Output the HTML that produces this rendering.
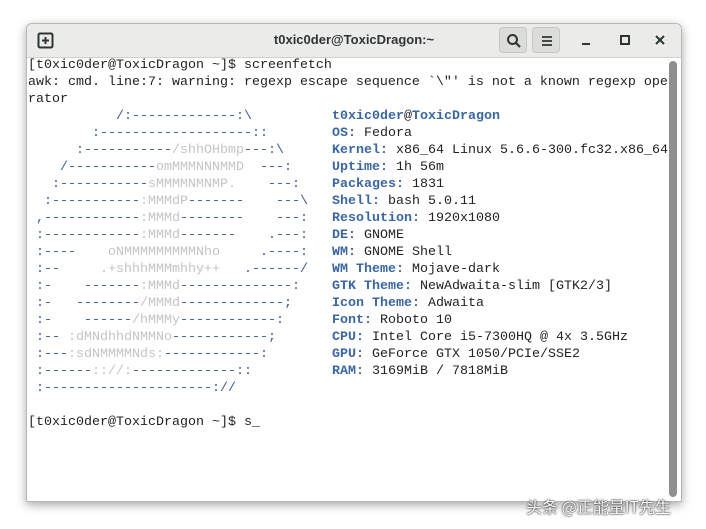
<!DOCTYPE html>
<html><head><meta charset="utf-8"><style>
html,body{margin:0;padding:0;background:#fff;width:706px;height:529px;overflow:hidden;position:relative;font-family:"Liberation Sans",sans-serif}
.win{position:absolute;left:26px;top:23px;width:654px;height:477px;background:#fff;border:1px solid #b8b8b8;border-radius:6px 6px 0 0;box-shadow:0 3px 10px rgba(0,0,0,.35);overflow:hidden}
.tb{position:absolute;left:0;top:0;width:654px;height:33px;background:#ebebea;border-bottom:1px solid #cfcfcd}
.title{position:absolute;left:0;width:654px;top:8px;text-align:center;font-size:13px;font-weight:bold;color:#2e3436}
.btn{position:absolute;top:3px;width:28px;height:26px;background:#dcdcda;border:1px solid #c8c8c6;border-radius:4px;box-sizing:border-box}
pre{position:absolute;left:1px;top:33px;margin:0;font-family:"Liberation Mono",monospace;font-size:13.33px;line-height:17px;color:#222}
.b{color:#3a5f94;display:inline-block;width:304px}.g{color:#c4c4c4}.l{color:#3a66a2;font-weight:bold}
.sb{position:absolute;left:642px;top:37px;width:8px;height:436px;background:#8f8f8f;border-radius:4px}
.wm{position:absolute;left:526px;top:494px;font-family:"Noto Sans CJK SC",sans-serif;font-size:16px;color:#fff;text-shadow:0 0 2px #333,0 0 1px #000}
</style></head><body>
<div class="win">
<div class="tb">
<svg style="position:absolute;left:10px;top:8px" width="17" height="17" viewBox="0 0 17 17"><rect x="1.5" y="1.5" width="14" height="14" rx="1.5" fill="none" stroke="#2e3436" stroke-width="2"/><path d="M8.5 5v7M5 8.5h7" stroke="#2e3436" stroke-width="2"/></svg>
<div class="title">t0xic0der@ToxicDragon:~</div>
<div class="btn" style="left:472px"><svg style="position:absolute;left:6px;top:5px" width="16" height="16" viewBox="0 0 16 16"><circle cx="6.5" cy="6.5" r="4.5" fill="none" stroke="#2e3436" stroke-width="2"/><path d="M10 10l4 4" stroke="#2e3436" stroke-width="2.2"/></svg></div>
<div class="btn" style="left:505px"><svg style="position:absolute;left:7px;top:6px" width="14" height="14" viewBox="0 0 14 14"><path d="M2 3h10M2 7h10M2 11h10" stroke="#2e3436" stroke-width="1.8"/></svg></div>
<div style="position:absolute;left:555px;top:19px;width:8px;height:2px;background:#2e3436"></div>
<div style="position:absolute;left:593px;top:11px;width:6px;height:6px;border:2px solid #2e3436"></div>
<svg style="position:absolute;left:628px;top:11px" width="10" height="10" viewBox="0 0 10 10"><path d="M1 1l8 8M9 1l-8 8" stroke="#2e3436" stroke-width="2"/></svg>
</div>
<pre>[t0xic0der@ToxicDragon ~]$ screenfetch
awk: cmd. line:7: warning: regexp escape sequence `\"' is not a known regexp ope
rator
<span class="b">           /:-------------:\</span><span class="l">t0xic0der</span>@<span class="l">ToxicDragon</span>
<span class="b">        :-------------------::</span><span class="l">OS:</span> Fedora
<span class="b">      :-----------<span class="g">/shhOHbmp</span>---:\</span><span class="l">Kernel:</span> x86_64 Linux 5.6.6-300.fc32.x86_64
<span class="b">    /-----------<span class="g">omMMMNNNMMD</span>  ---:</span><span class="l">Uptime:</span> 1h 56m
<span class="b">   :-----------<span class="g">sMMMMNMNMP.</span>    ---:</span><span class="l">Packages:</span> 1831
<span class="b">  :-----------<span class="g">:MMMdP</span>-------    ---\</span><span class="l">Shell:</span> bash 5.0.11
<span class="b"> ,------------<span class="g">:MMMd</span>--------    ---:</span><span class="l">Resolution:</span> 1920x1080
<span class="b"> :------------<span class="g">:MMMd</span>-------    .---:</span><span class="l">DE:</span> GNOME
<span class="b"> :----    <span class="g">oNMMMMMMMMMNho</span>     .----:</span><span class="l">WM:</span> GNOME Shell
<span class="b"> :--     <span class="g">.+shhhMMMmhhy++</span>   .------/</span><span class="l">WM Theme:</span> Mojave-dark
<span class="b"> :-    -------<span class="g">:MMMd</span>--------------:</span><span class="l">GTK Theme:</span> NewAdwaita-slim [GTK2/3]
<span class="b"> :-   --------<span class="g">/MMMd</span>-------------;</span><span class="l">Icon Theme:</span> Adwaita
<span class="b"> :-    ------<span class="g">/hMMMy</span>------------:</span><span class="l">Font:</span> Roboto 10
<span class="b"> :-- <span class="g">:dMNdhhdNMMNo</span>------------;</span><span class="l">CPU:</span> Intel Core i5-7300HQ @ 4x 3.5GHz
<span class="b"> :---<span class="g">:sdNMMMMNds:</span>------------:</span><span class="l">GPU:</span> GeForce GTX 1050/PCIe/SSE2
<span class="b"> :------<span class="g">:://:</span>-------------::</span><span class="l">RAM:</span> 3169MiB / 7818MiB
<span class="b"> :---------------------://</span>

[t0xic0der@ToxicDragon ~]$ s_</pre>
<div class="sb"></div>
</div>
<div class="wm">头条 @正能量IT先生</div>
</body></html>
